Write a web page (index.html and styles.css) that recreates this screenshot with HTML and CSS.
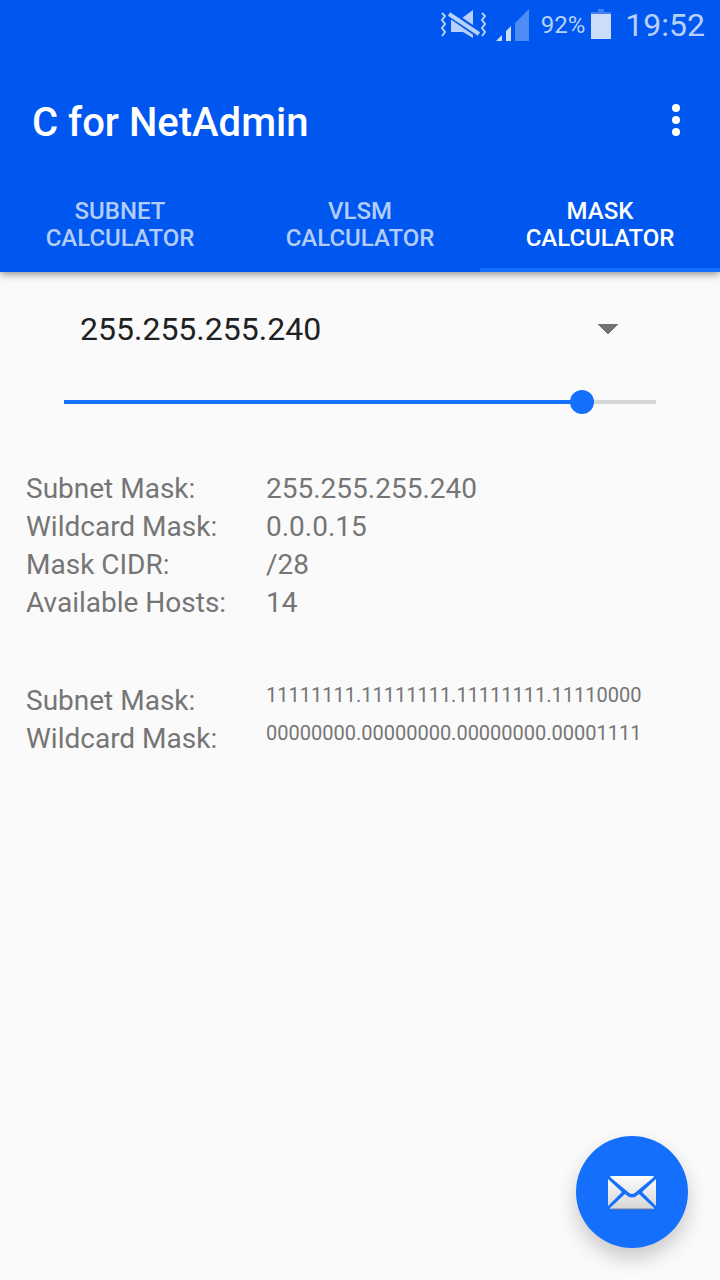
FILE: index.html
```html
<!DOCTYPE html>
<html lang="en">
<head>
<meta charset="utf-8">
<meta name="viewport" content="width=device-width, initial-scale=1">
<title>C for NetAdmin</title>
<link rel="stylesheet" href="styles.css">
</head>
<body>
<header class="appbar">
  <div class="status">
    <svg class="status-mute" width="48" height="32" viewBox="0 0 48 32" aria-hidden="true">
      <g fill="none" stroke="currentColor" stroke-width="2">
        <path d="M2 4l3 3-3 4 3 4-3 4 3 4-3 4"/>
        <path d="M42 4l3 3-3 4 3 4-3 4 3 4-3 4"/>
      </g>
      <path fill="currentColor" d="M22 9L33 1v28L23 23H11V11h11z"/>
      <path fill="none" stroke="#0057f0" stroke-width="8" d="M10 5l29 20"/>
      <path fill="none" stroke="currentColor" stroke-width="4" d="M9 5l30 20"/>
    </svg>
    <svg class="status-signal" width="34" height="32" viewBox="0 0 34 32" aria-hidden="true">
      <path fill="#ccddfc" d="M0 32l6-6v6zM10 22l5-5v15h-5z"/>
      <path fill="#4d8bf5" d="M19 14L33 0v32H19z"/>
    </svg>
    <span class="status-percent">92%</span>
    <svg class="status-battery" width="20" height="30" viewBox="0 0 20 30" aria-hidden="true">
      <path fill="#407ff4" d="M7 0h6v3h7v2H0V3h7z"/>
      <path fill="#ccddfc" d="M0 5h20v25H0z"/>
    </svg>
    <time class="status-time">19:52</time>
  </div>
  <div class="toolbar">
    <h1 class="title">C for NetAdmin</h1>
    <button class="more" type="button" aria-label="More options">
      <svg width="8" height="32" viewBox="0 0 8 32" fill="currentColor" aria-hidden="true">
        <circle cx="4" cy="4" r="4"/><circle cx="4" cy="16" r="4"/><circle cx="4" cy="28" r="4"/>
      </svg>
    </button>
  </div>
  <nav class="tabs" role="tablist">
    <button class="tab" type="button" role="tab" aria-selected="false">SUBNET CALCULATOR</button>
    <button class="tab" type="button" role="tab" aria-selected="false">VLSM CALCULATOR</button>
    <button class="tab tab-active" type="button" role="tab" aria-selected="true">MASK CALCULATOR</button>
  </nav>
</header>
<main class="content">
  <select class="mask-select" aria-label="Subnet mask">
    <option>255.255.255.240</option>
  </select>
  <input class="slider" type="range" min="0" max="32" value="28" aria-label="Mask length">
  <dl class="results">
    <dt>Subnet Mask:</dt><dd>255.255.255.240</dd>
    <dt>Wildcard Mask:</dt><dd>0.0.0.15</dd>
    <dt>Mask CIDR:</dt><dd>/28</dd>
    <dt>Available Hosts:</dt><dd>14</dd>
  </dl>
  <dl class="results results-binary">
    <dt>Subnet Mask:</dt><dd>11111111.11111111.11111111.11110000</dd>
    <dt>Wildcard Mask:</dt><dd>00000000.00000000.00000000.00001111</dd>
  </dl>
</main>
<button class="fab" type="button" aria-label="Send email">
  <svg width="48" height="34" viewBox="0 0 48 34" aria-hidden="true">
    <defs>
      <linearGradient id="paper" gradientUnits="userSpaceOnUse" x1="0" y1="0" x2="0" y2="34">
        <stop offset="0" stop-color="#fcfcfc"/><stop offset="1" stop-color="#d5d5d5"/>
      </linearGradient>
    </defs>
    <g fill="url(#paper)">
      <path d="M2 1Q2 0 4 0h40q2 0 2 1L28 16q-4 4-8 0z"/>
      <path d="M0 3l14 13L0 30zM48 3L34 16l14 14z"/>
      <path d="M2 32l15-14q7 7 14 0l15 14v1H2z"/>
    </g>
    <path fill="none" stroke="#6d7f9c" d="M3 33h42"/>
  </svg>
</button>
</body>
</html>
```

FILE: styles.css
```css
* {
  box-sizing: border-box;
}

body {
  margin: 0;
  min-height: 100vh;
  background: #fafafa;
  color: #757575;
  font-family: Roboto, "Noto Sans", sans-serif;
}

button {
  border: 0;
  padding: 0;
  background: none;
  color: inherit;
  font: inherit;
}

.appbar {
  background: #0057f0;
  color: #fff;
  box-shadow: 0 2px 8px rgba(0, 0, 0, 0.45);
}

.status {
  display: flex;
  justify-content: flex-end;
  align-items: center;
  height: 50px;
  padding-right: 15px;
  color: #b8d0fb;
}

.status-signal {
  margin-left: 8px;
}

.status-percent {
  margin-left: 11px;
  font-size: 24px;
}

.status-battery {
  margin: 0 14px 2px 6px;
}

.status-time {
  font-size: 32px;
}

.toolbar {
  display: flex;
  align-items: center;
  justify-content: space-between;
  height: 126px;
  padding: 18px 20px 0 32px;
}

.title {
  margin: 0;
  font-size: 40px;
  font-weight: 500;
}

.more {
  display: grid;
  place-items: center;
  width: 48px;
  height: 64px;
  margin-bottom: 4px;
}

.tabs {
  display: grid;
  grid-template-columns: repeat(3, 1fr);
}

.tab {
  height: 96px;
  padding: 6px 24px 0;
  border-bottom: 4px solid transparent;
  color: #b2cdfb;
  font-size: 24px;
  font-weight: 500;
  line-height: 27px;
}

.tab-active {
  border-bottom-color: #146ffd;
  color: #fff;
}

.content {
  display: flex;
  flex-direction: column;
  padding-top: 32px;
}

.mask-select {
  appearance: none;
  height: 50px;
  margin: 0 64px;
  padding: 0 16px;
  border: 0;
  background: conic-gradient(from -45deg at 50% 100%, #737373 90deg, transparent 0) right 38px center / 20px 10px no-repeat;
  color: #212121;
  font: 32px Roboto, "Noto Sans", sans-serif;
}

.slider {
  appearance: none;
  height: 24px;
  margin: 36px 52px 0;
  background: none;
}

.slider::-webkit-slider-runnable-track {
  height: 24px;
  background: linear-gradient(to right, transparent 12px, #146ffd 12px, #146ffd 86%, #d6d6d6 86%, #d6d6d6 calc(100% - 12px), transparent calc(100% - 12px)) center / 100% 4px no-repeat;
}

.slider::-webkit-slider-thumb {
  appearance: none;
  width: 24px;
  height: 24px;
  border-radius: 50%;
  background: #146ffd;
}

.results {
  display: grid;
  grid-template-columns: 240px 1fr;
  margin: 56px 26px 0;
  font-size: 28px;
  line-height: 38px;
}

.results dd {
  margin: 0;
}

.results-binary {
  margin-top: 60px;
}

.results-binary dd {
  font-size: 20px;
  line-height: 26px;
}

.fab {
  position: fixed;
  right: 32px;
  bottom: 32px;
  display: grid;
  place-items: center;
  width: 112px;
  height: 112px;
  padding-top: 2px;
  border-radius: 50%;
  background: #146ffd;
  box-shadow: 0 10px 20px rgba(0, 0, 0, 0.2);
}
```
